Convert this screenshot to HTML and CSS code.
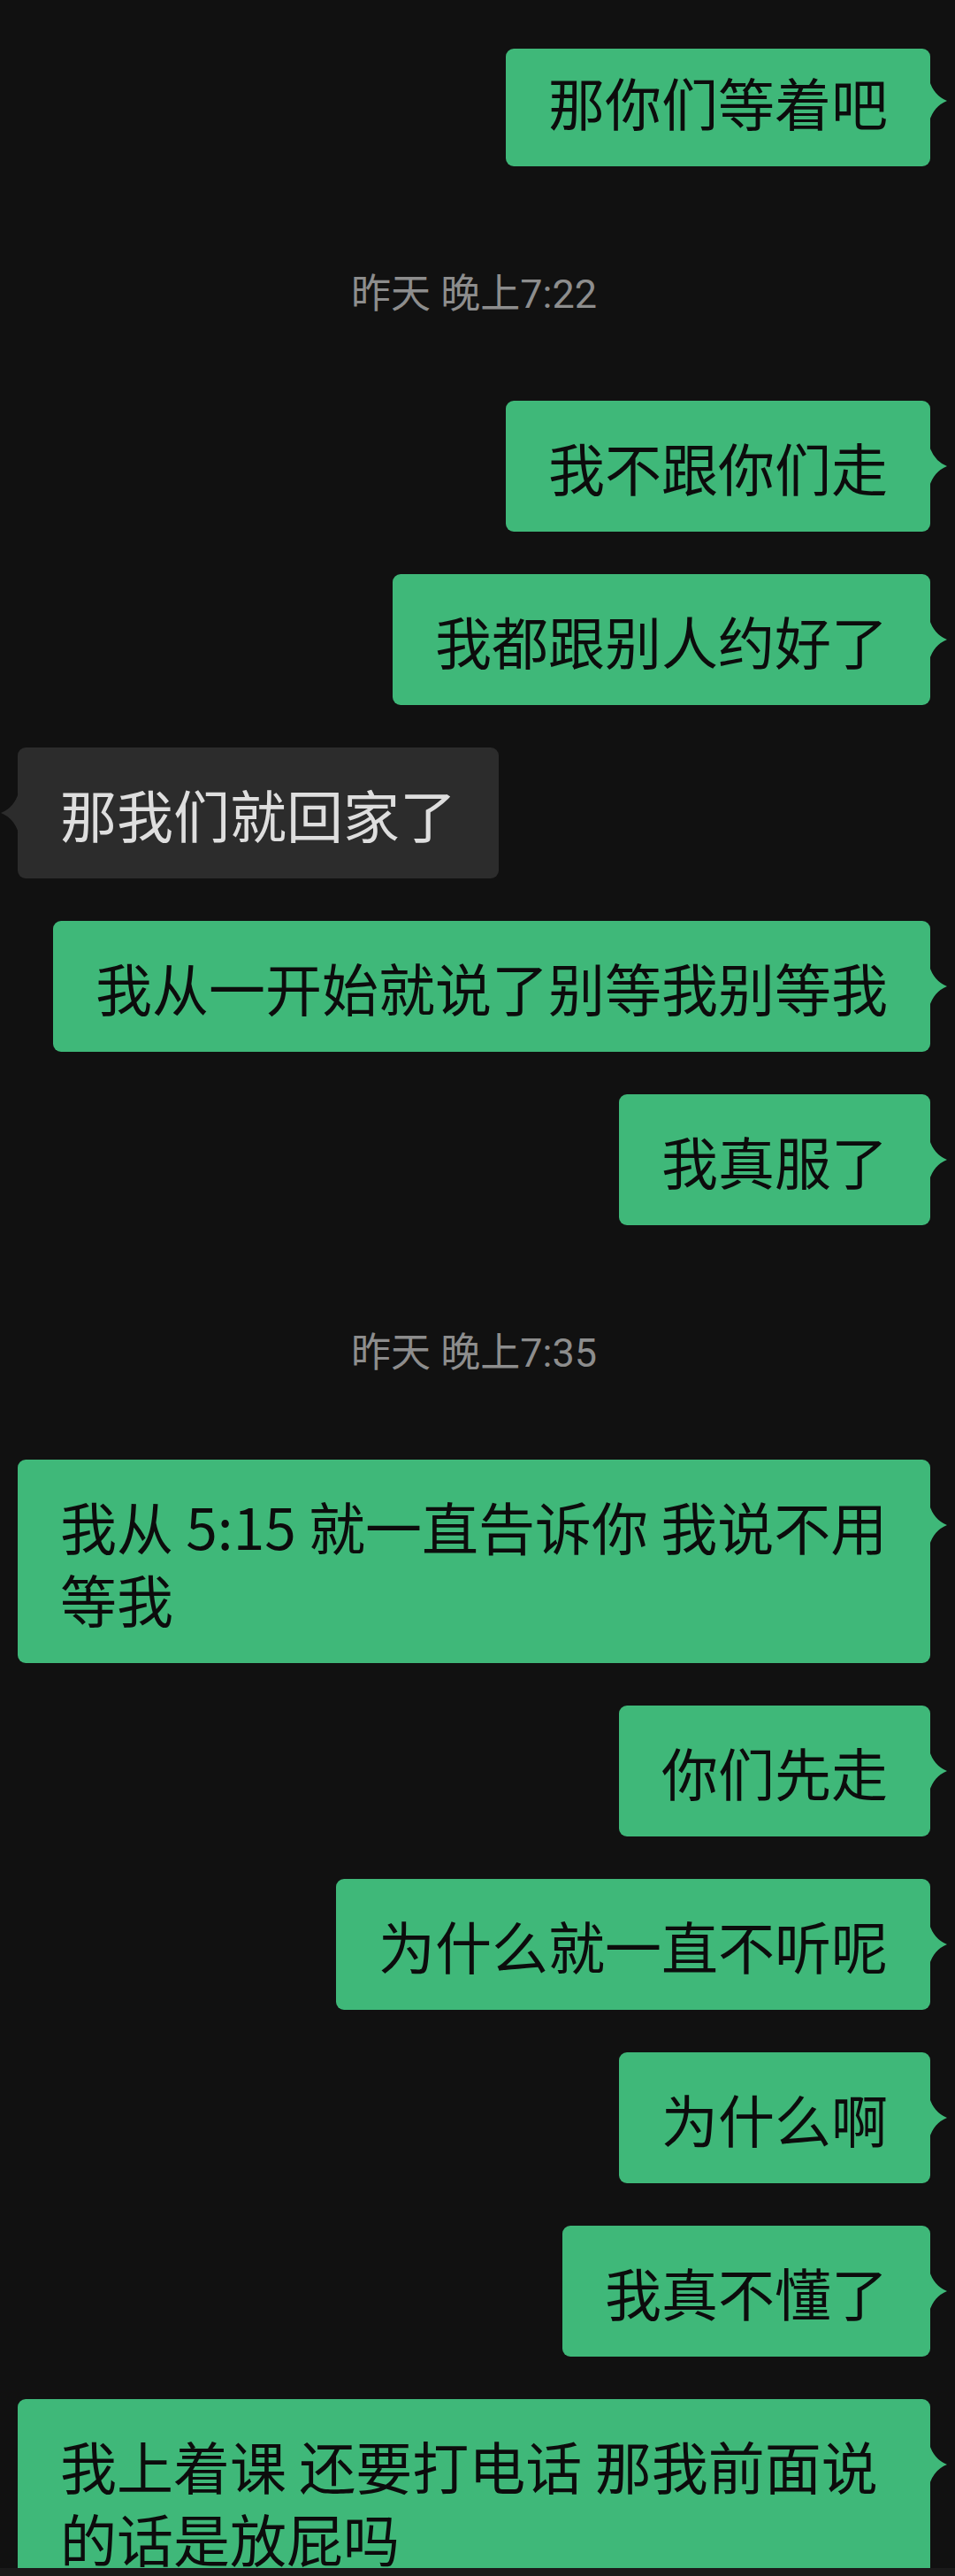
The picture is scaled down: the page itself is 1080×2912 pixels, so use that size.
FILE: index.html
```html
<!DOCTYPE html>
<html lang="zh-CN">
<head>
	<meta charset="UTF-8">
	<meta name="viewport" content="width=device-width, initial-scale=1.0">
	<title>聊天记录</title>
	<link rel="stylesheet" href="styles.css">
</head>
<body>
	<main class="chat">
		<div class="row row_me"><div class="bubble me cut">那你们等着吧</div></div>

		<div class="time">昨天 晚上7:22</div>

		<div class="row row_me"><div class="bubble me">我不跟你们走</div></div>
		<div class="row row_me"><div class="bubble me">我都跟别人约好了</div></div>
		<div class="row"><div class="bubble other">那我们就回家了</div></div>
		<div class="row row_me"><div class="bubble me">我从一开始就说了别等我别等我</div></div>
		<div class="row row_me"><div class="bubble me">我真服了</div></div>

		<div class="time">昨天 晚上7:35</div>

		<div class="row row_me"><div class="bubble me">我从 5:15 就一直告诉你 我说不用等我</div></div>
		<div class="row row_me"><div class="bubble me">你们先走</div></div>
		<div class="row row_me"><div class="bubble me">为什么就一直不听呢</div></div>
		<div class="row row_me"><div class="bubble me">为什么啊</div></div>
		<div class="row row_me"><div class="bubble me">我真不懂了</div></div>
		<div class="row row_me"><div class="bubble me">我上着课 还要打电话 那我前面说的话是放屁吗</div></div>
	</main>
	<div class="bottom_bar"></div>
</body>
</html>
```

FILE: styles.css
```css
*{margin:0; padding:0; box-sizing:border-box;}
html,body{
	background:#111111;
	overflow:hidden;
}
body{
	width:1080px;
	height:2912px;
	font-family:"Noto Sans CJK SC", sans-serif;
}
.chat{
	display:flex;
	flex-direction:column;
	gap:48px;
	height:2903px;
	overflow:hidden;
	padding:55px 28px 0 20px;
}
.row{
	display:flex;
}
.row_me{
	justify-content:flex-end;
}
.bubble{
	position:relative;
	max-width:1036px;
	padding:33px 48px;
	border-radius:9px;
	font-size:64px;
	line-height:82px;
}
/* 小三角 */
.bubble::after{
	content:'';
	position:absolute;
	top:51px;
	width:20px;
	height:46px;
}
.me{
	background:#3fb879;
	color:#0c0c0c;
}
.me::after{
	right:-19px;
	background:#3fb879;
	clip-path:path('M0 0 Q5 17 20 23 Q5 29 0 46 Z');
}
.other{
	background:#2c2c2c;
	color:#dedede;
}
.other::after{
	left:-19px;
	background:#2c2c2c;
	clip-path:path('M20 0 Q15 17 0 23 Q15 29 20 46 Z');
}
.cut{
	padding-top:18px;
}
.cut::after{
	top:36px;
}
.time{
	margin:72px 0 47px;
	text-align:center;
	font-family:Roboto, "Noto Sans CJK SC", sans-serif;
	font-size:45px;
	line-height:50px;
	color:#8d8d8d;
}
.bottom_bar{
	height:9px;
	background:#1a1a1a;
}
```
